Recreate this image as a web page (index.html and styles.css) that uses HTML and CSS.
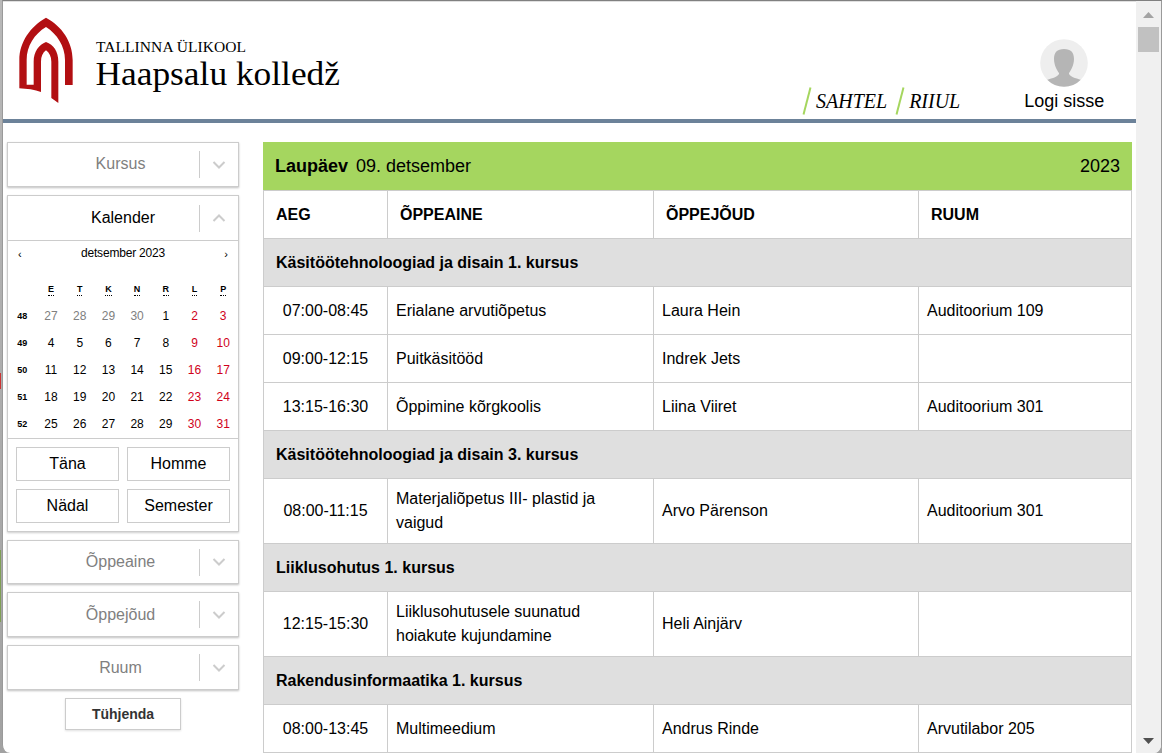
FILE: index.html
```html
<!DOCTYPE html>
<html lang="et">
<head>
<meta charset="utf-8">
<title>Haapsalu kolledž – tunniplaan</title>
<link rel="stylesheet" href="styles.css">
</head>
<body>
<div class="window">
  <div class="page">
    <header class="header">
      <svg class="logo" width="360" height="118" viewBox="0 0 360 118">
        <path transform="translate(7 9) scale(.33333)" fill="#b20f12" d="M28 235V150C28 95 62 49 108 23C156 49 188 95 188 150V225H165V150C165 108 141 72 108 51C73 72 50 108 50 150V224H71V155C71 125 87 104 108 96C131 104 145 125 145 155V279L124 264V155C124 140 118 128 108 121C98 128 93 140 93 155V246C75 239 50 236 28 235Z"/>
        <text class="logo-small" x="93" y="51" textLength="150">TALLINNA ÜLIKOOL</text>
        <text class="logo-big" x="92.500" y="84" textLength="244.500" lengthAdjust="spacingAndGlyphs">Haapsalu kolledž</text>
      </svg>
      <nav class="nav">
        <a class="nav-item"><svg width="10" height="28" viewBox="0 0 10 28"><path d="M1.5 27.5L8.5 .5" stroke="#a5d65f" stroke-width="2"/></svg><span>SAHTEL</span></a>
        <a class="nav-item"><svg width="10" height="28" viewBox="0 0 10 28"><path d="M1.5 27.5L8.5 .5" stroke="#a5d65f" stroke-width="2"/></svg><span>RIIUL</span></a>
      </nav>
      <div class="login">
        <svg width="48" height="48" viewBox="0 0 48 48"><clipPath id="c"><circle cx="24" cy="24" r="23.8"/></clipPath><circle cx="24" cy="24" r="23.8" fill="#eee"/><path clip-path="url(#c)" fill="#b5b5b5" d="M24 10C31 10 34 13.500 34 20C34 26 31 31.500 29 34V35C31 39 38 39 43 42V48H5V42C10 39 17 39 19 35V34C17 31.500 14 26 14 20C14 13.500 17 10 24 10Z"/></svg>
        <span>Logi sisse</span>
      </div>
    </header>
    <main class="main">
      <aside class="sidebar">
        <div class="select"><span class="label">Kursus</span><span class="arrow"><svg width="14" height="8" viewBox="0 0 14 8"><path d="M1.500 1L7 6.500L12.500 1"/></svg></span></div>
        <section class="calendar">
          <div class="cal-title"><span class="label">Kalender</span><span class="arrow"><svg width="14" height="8" viewBox="0 0 14 8"><path d="M1.500 7L7 1.500L12.500 7"/></svg></span></div>
          <div class="month"><span class="step">‹</span><span class="month-name">detsember 2023</span><span class="step">›</span></div>
          <div class="days">
            <b></b><abbr>E</abbr><abbr>T</abbr><abbr>K</abbr><abbr>N</abbr><abbr>R</abbr><abbr>L</abbr><abbr>P</abbr>
            <b>48</b><i class="out">27</i><i class="out">28</i><i class="out">29</i><i class="out">30</i><i>1</i><i class="red">2</i><i class="red">3</i>
            <b>49</b><i>4</i><i>5</i><i>6</i><i>7</i><i>8</i><i class="red">9</i><i class="red">10</i>
            <b>50</b><i>11</i><i>12</i><i>13</i><i>14</i><i>15</i><i class="red">16</i><i class="red">17</i>
            <b>51</b><i>18</i><i>19</i><i>20</i><i>21</i><i>22</i><i class="red">23</i><i class="red">24</i>
            <b>52</b><i>25</i><i>26</i><i>27</i><i>28</i><i>29</i><i class="red">30</i><i class="red">31</i>
          </div>
          <div class="ranges"><span>Täna</span><span>Homme</span><span>Nädal</span><span>Semester</span></div>
        </section>
        <div class="select short"><span class="label">Õppeaine</span><span class="arrow"><svg width="14" height="8" viewBox="0 0 14 8"><path d="M1.500 1L7 6.500L12.500 1"/></svg></span></div>
        <div class="select low"><span class="label">Õppejõud</span><span class="arrow"><svg width="14" height="8" viewBox="0 0 14 8"><path d="M1.500 1L7 6.500L12.500 1"/></svg></span></div>
        <div class="select low"><span class="label">Ruum</span><span class="arrow"><svg width="14" height="8" viewBox="0 0 14 8"><path d="M1.500 1L7 6.500L12.500 1"/></svg></span></div>
        <div class="clear">Tühjenda</div>
      </aside>
      <section class="schedule">
        <div class="date"><span><b>Laupäev</b><span class="day">09. detsember</span></span><span>2023</span></div>
        <div class="row head"><span>AEG</span><span>ÕPPEAINE</span><span>ÕPPEJÕUD</span><span>RUUM</span></div>
        <div class="group">Käsitöötehnoloogiad ja disain 1. kursus</div>
        <div class="row"><span>07:00-08:45</span><span>Erialane arvutiõpetus</span><span>Laura Hein</span><span>Auditoorium 109</span></div>
        <div class="row"><span>09:00-12:15</span><span>Puitkäsitööd</span><span>Indrek Jets</span><span></span></div>
        <div class="row"><span>13:15-16:30</span><span>Õppimine kõrgkoolis</span><span>Liina Viiret</span><span>Auditoorium 301</span></div>
        <div class="group">Käsitöötehnoloogiad ja disain 3. kursus</div>
        <div class="row tall"><span>08:00-11:15</span><span>Materjaliõpetus III- plastid ja<br>vaigud</span><span>Arvo Pärenson</span><span>Auditoorium 301</span></div>
        <div class="group">Liiklusohutus 1. kursus</div>
        <div class="row tall"><span>12:15-15:30</span><span>Liiklusohutusele suunatud<br>hoiakute kujundamine</span><span>Heli Ainjärv</span><span></span></div>
        <div class="group">Rakendusinformaatika 1. kursus</div>
        <div class="row"><span>08:00-13:45</span><span>Multimeedium</span><span>Andrus Rinde</span><span>Arvutilabor 205</span></div>
      </section>
    </main>
  </div>
  <div class="scrollbar">
    <svg width="11" height="6" viewBox="0 0 11 6"><path d="M0 6L5.500 0L11 6Z" fill="#a3a3a3"/></svg>
    <div class="thumb"></div>
    <svg width="11" height="6" viewBox="0 0 11 6"><path d="M0 0H11L5.500 6Z" fill="#505050"/></svg>
  </div>
</div>
</body>
</html>
```
FILE: styles.css
```css
* { box-sizing: border-box; }
body {
  margin: 0;
  height: 753px;
  overflow: hidden;
  background:
    linear-gradient(#c33, #c33) 0 373px / 1px 16px no-repeat,
    linear-gradient(#7f9f55, #7f9f55) 0 550px / 1px 72px no-repeat,
    linear-gradient(#b8b8b8, #a2a2a2);
  font: 16px/24px "Liberation Sans", Arial, sans-serif;
  color: #000;
}
.window {
  display: flex;
  height: 753px;
  margin-left: 2px;
  border: 1px solid #9a9a9a;
  border-top-color: #808080;
  border-bottom: 0;
  border-radius: 0 0 8px 8px;
  overflow: hidden;
  background: #fff;
}
.page { width: 1133px; box-shadow: inset 0 1px #e0e0e0; }
.header {
  display: flex;
  height: 122px;
  border-bottom: 4px solid #6c8299;
}
.logo { flex: none; }
.logo-small { font: 15.500px "Liberation Serif", serif; }
.logo-big { font: 33px "Liberation Serif", serif; }
.nav {
  display: flex;
  gap: 8px;
  margin: 86px 0 0 439px;
  font: italic 20px/28px "Liberation Serif", serif;
}
.nav-item { display: flex; gap: 4px; }
.login {
  display: flex;
  flex-direction: column;
  align-items: center;
  margin: 38px 0 0 64px;
  font-size: 18px;
  line-height: 29px;
  white-space: nowrap;
}
.main {
  display: flex;
  align-items: flex-start;
  gap: 24px;
  padding: 19px 0 0 4px;
}
.sidebar {
  display: flex;
  flex-direction: column;
  gap: 8px;
  width: 232px;
}
.select {
  display: flex;
  align-items: center;
  height: 45px;
  border: 1px solid #ccc;
  box-shadow: 0 1px 2px rgba(0, 0, 0, .25);
  color: #808080;
}
.select.short { height: 44px; }
.label { flex: 1; padding: 0 0 1px 34px; text-align: center; }
.select.short .label,
.select.low .label { padding-bottom: 0; }
.arrow {
  display: flex;
  align-items: center;
  justify-content: center;
  width: 39px;
  height: 27px;
  border-left: 1px solid #ccc;
}
.arrow path { fill: none; stroke: #ccc; stroke-width: 2; }
.calendar {
  height: 337px;
  border: 1px solid #ccc;
  box-shadow: 0 1px 2px rgba(0, 0, 0, .2);
}
.cal-title {
  display: flex;
  align-items: center;
  height: 45px;
  border-bottom: 1px solid #ccc;
}
.cal-title .label { padding: 0 0 1px 39px; }
.month {
  display: flex;
  justify-content: space-between;
  height: 35px;
  padding: 0 10px;
  font-size: 12px;
}
.month-name { letter-spacing: -.2px; }
.step { font-size: 11px; line-height: 27px; }
.days {
  display: grid;
  grid-template-columns: repeat(8, 28.700px);
  grid-template-rows: repeat(6, 27px);
  align-items: center;
  justify-items: center;
  height: 163px;
  border-bottom: 1px solid #ccc;
  font-size: 12px;
}
.days i { font-style: normal; line-height: 27px; }
.days b { font-size: 9px; line-height: 27px; }
.days abbr {
  padding-top: 1px;
  font-weight: bold;
  font-size: 9px;
  line-height: 11px;
  border-bottom: 1px dotted #000;
}
.days .out { color: #808080; }
.days .red { color: #d0021b; }
.ranges {
  display: grid;
  grid-template-columns: 103px 103px;
  grid-auto-rows: 34px;
  gap: 8px;
  padding: 8px;
}
.ranges span { border: 1px solid #ccc; text-align: center; line-height: 31px; }
.clear {
  width: 116px;
  height: 32px;
  margin-left: 58px;
  border: 1px solid #ccc;
  box-shadow: 0 1px 2px rgba(0, 0, 0, .12);
  color: #333;
  font-size: 14px;
  font-weight: bold;
  line-height: 30px;
  text-align: center;
}
.schedule { width: 869px; }
.date {
  display: flex;
  justify-content: space-between;
  height: 48px;
  padding: 0 12px;
  background: #a5d65f;
  font-size: 18px;
  line-height: 48px;
}
.day { margin-left: 8px; }
.row, .group {
  height: 48px;
  border: 1px solid #ccc;
  border-width: 1px 0 0 1px;
}
.group {
  padding-left: 12px;
  border-right-width: 1px;
  background: #dfdfdf;
  font-weight: bold;
  line-height: 47px;
}
.row {
  display: grid;
  grid-template-columns: 124px 266px 265px 213px;
}
.row span {
  display: flex;
  align-items: center;
  padding-left: 8px;
  border-right: 1px solid #ccc;
}
.row.tall { height: 65px; }
.row span:first-child { justify-content: center; padding-left: 0; }
.row.head span { padding-left: 12px; justify-content: flex-start; font-weight: bold; }
.row:last-child { height: 49px; border-bottom-width: 1px; }
.scrollbar {
  display: flex;
  flex-direction: column;
  align-items: center;
  width: 25px;
  padding: 11px 0 9px;
  background: #f0f0f0;
}
.thumb { width: 21px; height: 25px; margin: 9px 0 auto; background: #c1c1c1; }
```
